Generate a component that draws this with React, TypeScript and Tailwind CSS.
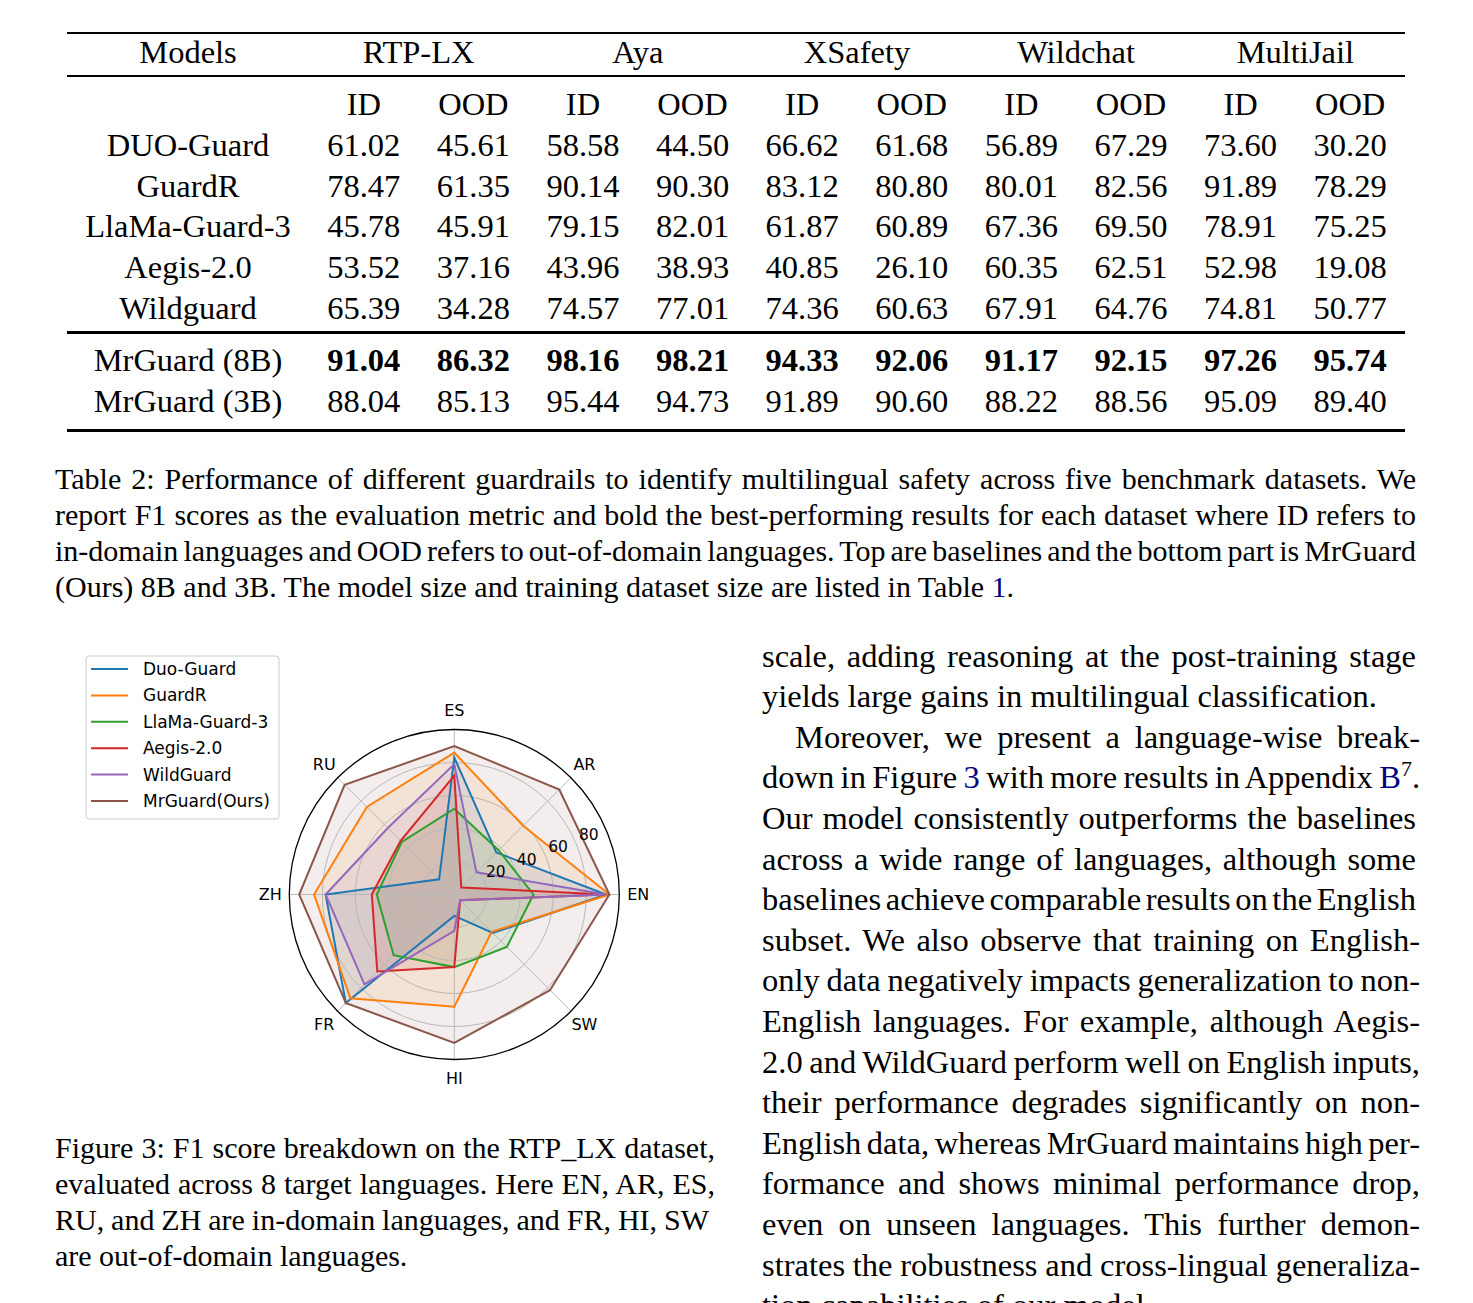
import React from "react";

const cols = "grid grid-cols-[242px_repeat(10,109.6px)] text-center";

const rows: string[][] = [
  ["DUO-Guard", "61.02", "45.61", "58.58", "44.50", "66.62", "61.68", "56.89", "67.29", "73.60", "30.20"],
  ["GuardR", "78.47", "61.35", "90.14", "90.30", "83.12", "80.80", "80.01", "82.56", "91.89", "78.29"],
  ["LlaMa-Guard-3", "45.78", "45.91", "79.15", "82.01", "61.87", "60.89", "67.36", "69.50", "78.91", "75.25"],
  ["Aegis-2.0", "53.52", "37.16", "43.96", "38.93", "40.85", "26.10", "60.35", "62.51", "52.98", "19.08"],
  ["Wildguard", "65.39", "34.28", "74.57", "77.01", "74.36", "60.63", "67.91", "64.76", "74.81", "50.77"],
];
const ours: string[][] = [
  ["MrGuard (8B)", "91.04", "86.32", "98.16", "98.21", "94.33", "92.06", "91.17", "92.15", "97.26", "95.74"],
  ["MrGuard (3B)", "88.04", "85.13", "95.44", "94.73", "91.89", "90.60", "88.22", "88.56", "95.09", "89.40"],
];

function Row({ r, bold }: { r: string[]; bold?: boolean }) {
  return (
    <div className={`${cols} h-[40.8px] leading-[40.8px]`}>
      {r.map((c, i) => (
        <div key={i} className={bold && i > 0 ? "font-bold" : ""}>
          {c}
        </div>
      ))}
    </div>
  );
}

function Table() {
  return (
    <div className="ml-[67px] w-[1338px] text-[32.5px]">
      <div className="h-[2.5px] bg-black" />
      <div className={`${cols} h-[36px] leading-[36px]`}>
        <div>Models</div>
        <div className="col-span-2">RTP-LX</div>
        <div className="col-span-2">Aya</div>
        <div className="col-span-2">XSafety</div>
        <div className="col-span-2">Wildchat</div>
        <div className="col-span-2">MultiJail</div>
      </div>
      <div className="mt-[4.5px] h-[2.5px] bg-black" />
      <div className="mt-[7px]">
        <Row r={["", "ID", "OOD", "ID", "OOD", "ID", "OOD", "ID", "OOD", "ID", "OOD"]} />
        {rows.map((r, i) => (
          <Row key={i} r={r} />
        ))}
      </div>
      <div className="mt-[2.5px] h-[2.5px] bg-black" />
      <div className="mt-[6px]">
        <Row r={ours[0]} bold />
        <Row r={ours[1]} />
      </div>
      <div className="mt-[8px] h-[2.5px] bg-black" />
    </div>
  );
}

function J({
  children,
  last,
  hang,
  className = "",
}: {
  children: React.ReactNode;
  last?: boolean;
  hang?: boolean;
  className?: string;
}) {
  return (
    <div
      className={`whitespace-nowrap ${
        last ? "text-left" : "text-justify [text-align-last:justify] [word-spacing:-6px]"
      } ${hang ? "mr-[-4px]" : ""} ${className}`}
    >
      {children}
    </div>
  );
}

const Link = ({ children }: { children: React.ReactNode }) => <span className="text-[#000080]">{children}</span>;

const cx = 454.3;
const cy = 894.5;
const R = 165;
const K = 1.65;
const series = [
  { name: "Duo-Guard", c: "#1f77b4", v: [92, 36, 83, 13, 78, 93, 13, 33] },
  { name: "GuardR", c: "#ff7f0e", v: [94, 59, 86, 75, 85, 89, 68, 32] },
  { name: "LlaMa-Guard-3", c: "#2ca02c", v: [48, 38, 52, 45, 47, 52, 44, 45] },
  { name: "Aegis-2.0", c: "#d62728", v: [92, 6, 72, 46, 50, 66, 44, 5] },
  { name: "WildGuard", c: "#9467bd", v: [92, 19, 79, 57, 78, 77, 22, 5] },
  { name: "MrGuard(Ours)", c: "#8c564b", v: [94, 90, 90, 94, 94, 93, 90, 82] },
];
const axes = ["EN", "AR", "ES", "RU", "ZH", "FR", "HI", "SW"];

function pt(r: number, i: number): [number, number] {
  const a = (i * Math.PI) / 4;
  return [cx + r * Math.cos(a), cy - r * Math.sin(a)];
}

function Radar() {
  const poly = (v: number[]) => v.map((x, i) => pt(x * K, i).join(",")).join(" ");
  const font = "'DejaVu Sans', 'Liberation Sans', sans-serif";
  return (
    <svg width={654} height={525} viewBox="55 605 654 525" className="block overflow-visible">
      {series.map((s) => (
        <polygon key={s.name + "f"} points={poly(s.v)} fill={s.c} fillOpacity={0.1} stroke="none" />
      ))}
      {[20, 40, 60, 80].map((g) => (
        <circle key={g} cx={cx} cy={cy} r={g * K} fill="none" stroke="#b8b8b8" strokeWidth={1} />
      ))}
      {axes.map((_, i) => {
        const [x, y] = pt(R, i);
        return <line key={i} x1={cx} y1={cy} x2={x} y2={y} stroke="#b8b8b8" strokeWidth={1} />;
      })}
      {series.map((s) => (
        <polygon key={s.name + "l"} points={poly(s.v)} fill="none" stroke={s.c} strokeWidth={2} strokeLinejoin="miter" />
      ))}
      <circle cx={cx} cy={cy} r={R} fill="none" stroke="#000" strokeWidth={1.3} />
      {axes.map((a, i) => {
        const [x, y] = pt(184, i);
        return (
          <text key={a} x={x} y={y + 5.8} textAnchor="middle" fontSize={16} fontFamily={font} fill="#000">
            {a}
          </text>
        );
      })}
      {[
        ["20", 495.8, 871.5],
        ["40", 526.7, 859.3],
        ["60", 558, 846.7],
        ["80", 588.8, 834],
      ].map(([t, x, y]) => (
        <text key={t as string} x={x as number} y={(y as number) + 5.5} textAnchor="middle" fontSize={15.5} fontFamily={font} fill="#000">
          {t}
        </text>
      ))}
      <rect x={86} y={656} width={193} height={163} rx={3} fill="#fff" fillOpacity={0.8} stroke="#cccccc" strokeWidth={1} />
      {series.map((s, i) => {
        const y = 669 + 26.4 * i;
        return (
          <g key={s.name + "g"}>
            <line x1={91} y1={y} x2={128} y2={y} stroke={s.c} strokeWidth={2} />
            <text x={143} y={y + 6} fontSize={17} fontFamily={font} fill="#000">
              {s.name}
            </text>
          </g>
        );
      })}
    </svg>
  );
}

export default function App() {
  return (
    <div className="w-[1473px] h-[1303px] overflow-hidden bg-white text-black [font-family:Liberation_Serif,Times_New_Roman,serif] pt-[31.5px]">
      <Table />
      <div className="mt-[29px] ml-[55px] w-[1361px] text-[30px] leading-[36px]">
        <J>Table 2: Performance of different guardrails to identify multilingual safety across five benchmark datasets. We</J>
        <J>report F1 scores as the evaluation metric and bold the best-performing results for each dataset where ID refers to</J>
        <J>in-domain languages and OOD refers to out-of-domain languages. Top are baselines and the bottom part is MrGuard</J>
        <J last>
          (Ours) 8B and 3B. The model size and training dataset size are listed in Table <Link>1</Link>.
        </J>
      </div>
      <div className="ml-[55px] flex w-[1361px] gap-[53px]">
        <div className="w-[654px] shrink-0">
          <Radar />
          <div className="text-[30px] leading-[36px]">
            <J className="mr-[-6px]">Figure 3: F1 score breakdown on the RTP_LX dataset,</J>
            <J className="mr-[-6px]">evaluated across 8 target languages. Here EN, AR, ES,</J>
            <J>RU, and ZH are in-domain languages, and FR, HI, SW</J>
            <J last>are out-of-domain languages.</J>
          </div>
        </div>
        <div className="w-[654px] shrink-0 pt-[30.8px] text-[32.5px] leading-[40.6px]">
          <J>scale, adding reasoning at the post-training stage</J>
          <J last>yields large gains in multilingual classification.</J>
          <J hang className="pl-[33px]">Moreover, we present a language-wise break-</J>
          <J hang>
            down in Figure <Link>3</Link> with more results in Appendix <Link>B</Link>
            <span className="relative top-[-12px] text-[22px] leading-none">7</span>.
          </J>
          <J>Our model consistently outperforms the baselines</J>
          <J>across a wide range of languages, although some</J>
          <J>baselines achieve comparable results on the English</J>
          <J hang>subset. We also observe that training on English-</J>
          <J hang>only data negatively impacts generalization to non-</J>
          <J hang>English languages. For example, although Aegis-</J>
          <J hang>2.0 and WildGuard perform well on English inputs,</J>
          <J hang>their performance degrades significantly on non-</J>
          <J hang>English data, whereas MrGuard maintains high per-</J>
          <J hang>formance and shows minimal performance drop,</J>
          <J hang>even on unseen languages. This further demon-</J>
          <J hang>strates the robustness and cross-lingual generaliza-</J>
          <J last>tion capabilities of our model.</J>
        </div>
      </div>
    </div>
  );
}
